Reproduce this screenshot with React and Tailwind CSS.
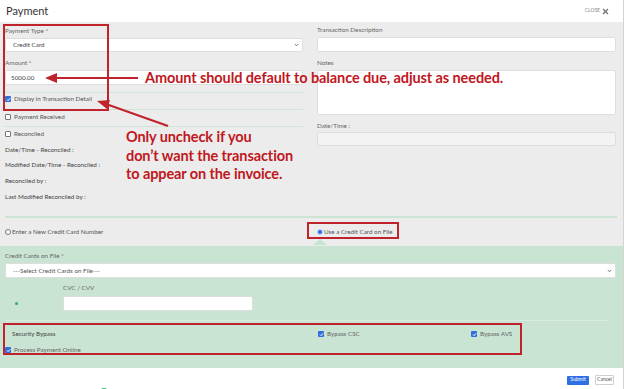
import React from "react";

const LINE = "h-px bg-[#cfe5d7]";

function Check({ checked }) {
  return checked ? (
    <span className="w-[6px] h-[6px] rounded-[1px] bg-[#2f6fdc] flex items-center justify-center shrink-0">
      <svg width="5" height="5" viewBox="0 0 10 10">
        <path d="M2 5.2 L4.2 7.4 L8.2 2.6" stroke="#fff" strokeWidth="2" fill="none" />
      </svg>
    </span>
  ) : (
    <span className="w-[6px] h-[6px] rounded-[1px] border border-[#777] bg-white shrink-0" />
  );
}

function Radio({ checked }) {
  return checked ? (
    <span className="w-[6px] h-[6px] rounded-full bg-[#bcd3f7] flex items-center justify-center shrink-0">
      <span className="w-[4px] h-[4px] rounded-full bg-[#2a6be0]" />
    </span>
  ) : (
    <span className="w-[6px] h-[6px] rounded-full border border-[#777] bg-white shrink-0" />
  );
}

function Chevron() {
  return (
    <svg width="5" height="4" viewBox="0 0 10 8" className="shrink-0">
      <path d="M1.5 2 L5 5.5 L8.5 2" stroke="#555" strokeWidth="1.6" fill="none" />
    </svg>
  );
}

function Label({ children, className = "" }) {
  return (
    <div className={`h-[8px] leading-[8px] text-[6.3px] text-[#666] ${className}`}>{children}</div>
  );
}

function Field({ className = "", children }) {
  return (
    <div className={`bg-white border border-[#dedede] rounded-[2px] flex items-center text-[6.3px] text-[#444] ${className}`}>
      {children}
    </div>
  );
}

function CheckRow({ checked, children, className = "" }) {
  return (
    <div className={`h-[10px] flex items-center gap-[3px] text-[6.3px] text-[#555] ${className}`}>
      <Check checked={checked} />
      <span>{children}</span>
    </div>
  );
}

function Info({ children, className = "" }) {
  return (
    <div className={`h-[8px] leading-[8px] text-[6.3px] text-[#444] ${className}`}>{children}</div>
  );
}

function Overlay() {
  const red = "#c0232b";
  return (
    <svg width="624" height="389" className="absolute inset-0 pointer-events-none">
      <polygon points="313,245 320,239 327,245" fill="#c9e4d2" />
      <rect x="4" y="25" width="104" height="85" fill="none" stroke={red} strokeWidth="2" />
      <rect x="308" y="223" width="90" height="15" fill="none" stroke={red} strokeWidth="2" />
      <rect x="4" y="324" width="517" height="30" fill="none" stroke={red} strokeWidth="2" />
      <line x1="138" y1="78" x2="55" y2="78" stroke={red} strokeWidth="2.2" />
      <polygon points="45,78 57,73 57,83" fill={red} />
      <line x1="168" y1="126" x2="106" y2="104" stroke={red} strokeWidth="2.2" />
      <polygon points="97,101 110,100 107,109" fill={red} />
    </svg>
  );
}

function Annotations() {
  const cls = "absolute font-bold text-[#c0171d] text-[14.5px] tracking-[-0.1px]";
  return (
    <>
      <div className={`${cls} left-[145px] top-[68px] leading-[20px] whitespace-nowrap`}>
        Amount should default to balance due, adjust as needed.
      </div>
      <div className={`${cls} left-[126px] top-[128px] leading-[18.5px] whitespace-nowrap`}>
        <div>Only uncheck if you</div>
        <div>don’t want the transaction</div>
        <div>to appear on the invoice.</div>
      </div>
    </>
  );
}

export default function App() {
  return (
    <div
      className="relative w-[624px] h-[389px] overflow-hidden bg-white border-r border-[#d4d4d4]"
      style={{ fontFamily: "Lato, 'Open Sans', sans-serif" }}
    >
      {/* header */}
      <div className="h-[22px] flex items-center justify-between pl-[6px] pr-[14px]">
        <span className="text-[11px] text-[#333]">Payment</span>
        <span className="flex items-center gap-[2px] text-[5px] text-[#888]">
          CLOSE
          <svg width="7" height="7" viewBox="0 0 10 10">
            <path d="M1.5 1.5 L8.5 8.5 M8.5 1.5 L1.5 8.5" stroke="#777" strokeWidth="2" />
          </svg>
        </span>
      </div>

      {/* gray form */}
      <div className="bg-[#ececec] pl-[5px] pr-[7px]">
        <div className="grid grid-cols-[298px_299px] gap-x-[14px] items-start">
          <div className="flex flex-col">
            <Label className="mt-[5px]">Payment Type *</Label>
            <Field className="mt-[3px] h-[14px] pl-[7px] pr-[3px] justify-between">
              <span>Credit Card</span>
              <Chevron />
            </Field>
            <Label className="mt-[7px]">Amount *</Label>
            <Field className="mt-[3px] h-[15px] pl-[5px]">5000.00</Field>
            <div className={`${LINE} mt-[7px]`} />
            <CheckRow checked className="mt-[1px]">Display in Transaction Detail</CheckRow>
            <div className={`${LINE} mt-[5px]`} />
            <CheckRow className="mt-[2px]">Payment Received</CheckRow>
            <div className={`${LINE} mt-[4px]`} />
            <CheckRow className="mt-[2px]">Reconciled</CheckRow>
            <Info className="mt-[7px]">Date/Time - Reconciled :</Info>
            <Info className="mt-[7px]">Modified Date/Time - Reconciled :</Info>
            <Info className="mt-[8px]">Reconciled by :</Info>
            <Info className="mt-[8px]">Last Modified Reconciled by :</Info>
          </div>
          <div className="flex flex-col">
            <Label className="mt-[4px]">Transaction Description</Label>
            <Field className="mt-[3px] h-[15px]" />
            <Label className="mt-[7px]">Notes</Label>
            <Field className="mt-[3px] h-[45px]" />
            <Label className="mt-[7px]">Date/Time :</Label>
            <div className="mt-[2px] h-[14px] bg-[#f3f3f3] border border-[#dddddd] rounded-[2px]" />
          </div>
        </div>
        <div className="mt-[15px] h-[2px] bg-[#cbe4d4] mr-[-1px]" />
        <div className="grid grid-cols-[298px_299px] gap-x-[14px] h-[28px] items-center">
          <div className="flex items-center gap-[1px] text-[6.3px] text-[#555]">
            <Radio />
            <span>Enter a New Credit Card Number</span>
          </div>
          <div className="flex items-center gap-[1px] text-[6.3px] text-[#555]">
            <Radio checked />
            <span>Use a Credit Card on File</span>
          </div>
        </div>
      </div>

      {/* green card section */}
      <div className="bg-[#c9e4d2] pl-[5px] pr-[7px] pt-[6px] pb-[13px]">
        <Label className="text-[#555]">Credit Cards on File *</Label>
        <Field className="mt-[3px] h-[15px] pl-[7px] pr-[3px] justify-between">
          <span className="text-[#555]">---Select Credit Cards on File---</span>
          <Chevron />
        </Field>
        <Label className="mt-[6px] ml-[58px] text-[#555]">CVC / CVV</Label>
        <div className="mt-[4px] flex items-center">
          <span className="ml-[10px] w-[3px] h-[3px] rounded-full bg-[#2fae62]" />
          <Field className="ml-[45px] w-[190px] h-[15px]" />
        </div>
        <div className="mt-[9px] h-px bg-[#d9ece0] mr-[7px]" />
        <div className="mt-[9px] h-[8px] flex items-center text-[6.3px] text-[#444]">
          <span className="ml-[7px] w-[306px]">Security Bypass</span>
          <span className="w-[153px] flex items-center gap-[3px] text-[#666]">
            <Check checked />
            Bypass CSC
          </span>
          <span className="flex items-center gap-[3px] text-[#666]">
            <Check checked />
            Bypass AVS
          </span>
        </div>
        <CheckRow checked className="mt-[7px] h-[8px] gap-[1px] text-[#666]">Process Payment Online</CheckRow>
      </div>

      {/* footer */}
      <div className="flex flex-col">
        <div className="flex justify-end items-center gap-[6px] pr-[9px] pt-[7px]">
          <span className="h-[9px] w-[22px] rounded-[1px] bg-[#2f6fe4] text-white text-[5px] flex items-center justify-center">
            Submit
          </span>
          <span className="h-[10px] w-[19px] rounded-[1px] bg-white border border-[#cfcfcf] text-[#555] text-[5px] flex items-center justify-center">
            Cancel
          </span>
        </div>
        <span className="mt-[3px] ml-[100px] w-[8px] h-[8px] rounded-full bg-[#2fb86a]" />
      </div>

      <Overlay />
      <Annotations />
    </div>
  );
}
